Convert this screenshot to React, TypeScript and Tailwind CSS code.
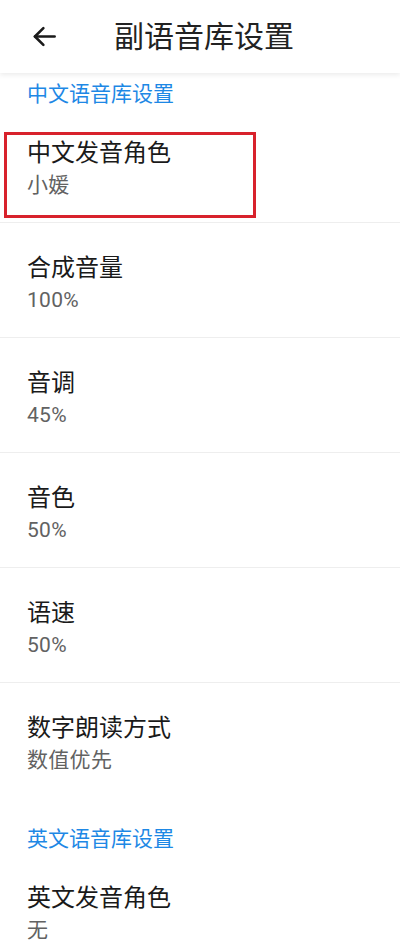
const font = { fontFamily: 'Roboto, "Noto Sans CJK SC", "Noto Sans", sans-serif' };

interface RowProps {
    title: string;
    value: string;
    divider?: boolean;
    highlight?: boolean;
}

function Row({ title, value, divider = true, highlight = false }: RowProps) {
    return (
        <div className={`relative h-[115px] pl-[27px] pt-[29px] ${divider ? "border-b border-[#eeeeee]" : ""}`}>
            <div className="text-[24px] leading-[32px] text-[#1a1a1a]">{title}</div>
            <div className="mt-[2px] text-[21px] leading-[28px] tracking-[0.3px] text-[#626262]">{value}</div>
            {highlight && (
                <div className="pointer-events-none absolute left-[4px] top-[24px] h-[86px] w-[252px] border-[3px] border-[#d8222c]" />
            )}
        </div>
    );
}

function SectionHeader({ label, className }: { label: string; className: string }) {
    return (
        <div className={`pl-[27px] text-[21px] leading-[28px] text-[#1e88e5] ${className}`}>
            {label}
        </div>
    );
}

export default function App() {
    return (
        <div className="min-h-[949px] w-[400px] overflow-hidden bg-white" style={font}>
            <header className="relative z-10 flex h-[73px] items-center bg-white shadow-[0_2px_5px_rgba(0,0,0,0.08)]">
                <svg
                    className="ml-[31px]"
                    width="27"
                    height="27"
                    viewBox="0 0 24 24"
                    fill="none"
                    stroke="#1a1a1a"
                    strokeWidth="2.3"
                    strokeLinecap="round"
                    strokeLinejoin="round"
                >
                    <path d="M21 12H3.5" />
                    <path d="M11 4.5L3.5 12L11 19.5" />
                </svg>
                <h1 className="ml-[56px] text-[30px] leading-[40px] text-[#222222]">副语音库设置</h1>
            </header>

            <SectionHeader label="中文语音库设置" className="pt-[7px]" />
            <Row title="中文发音角色" value="小媛" highlight />
            <Row title="合成音量" value="100%" />
            <Row title="音调" value="45%" />
            <Row title="音色" value="50%" />
            <Row title="语速" value="50%" />
            <Row title="数字朗读方式" value="数值优先" divider={false} />

            <SectionHeader label="英文语音库设置" className="pt-[27px]" />
            <Row title="英文发音角色" value="无" divider={false} />
        </div>
    );
}
